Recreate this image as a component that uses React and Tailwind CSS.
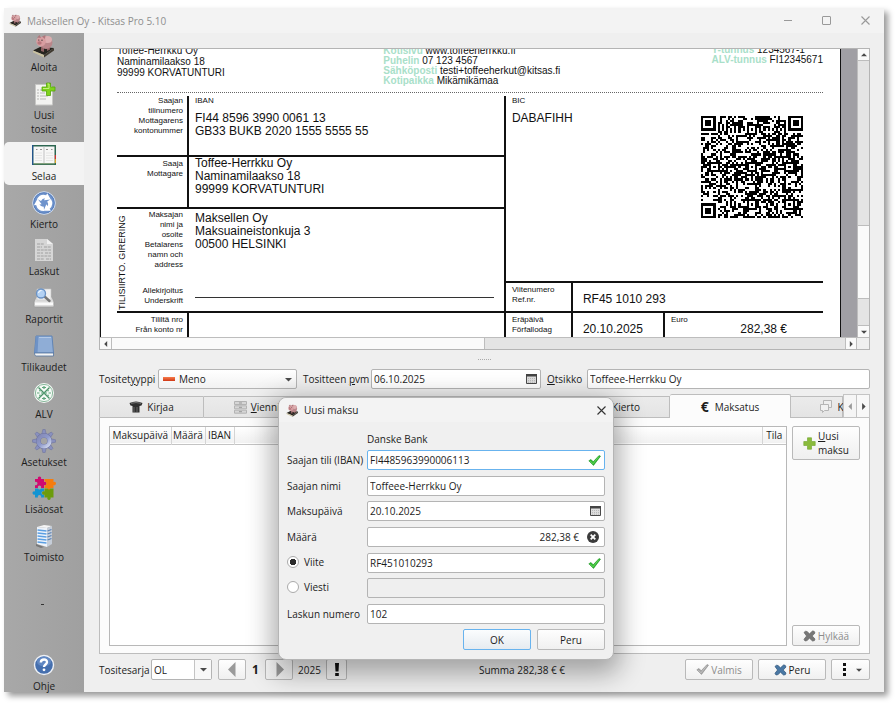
import React from "react";

const UI = "font-['Open_Sans','Noto_Sans',sans-serif] text-[10px] leading-[14px] text-[#1c1c1c]";
const FIELD = "h-5 rounded-[2px] border border-[#b4b4b4] bg-white px-[2px] text-[#1c1c1c] outline-none";
const BTN = "flex h-[21px] items-center justify-center rounded-[2px] border border-[#b9b9b9] bg-linear-to-b from-[#fefefe] to-[#f0f0f0]";

/* ---------- icons ---------- */

function Pig({ size = 24 }) {
  return (
    <svg width={size} height={size} viewBox="0 0 24 24" aria-hidden="true" className="shrink-0">
      <path d="M1 16.500 8 13l14 1-10 7z" fill="#26241f" />
      <path d="M1 16.500v1.800L12 23.500V21z" fill="#c9c09f" />
      <path d="M12 21v2.500l10-7V14z" fill="#403a30" />
      <path d="M9 13v4l3 1v-4zM15 13v4l3-1.500v-4z" fill="#8f6163" />
      <ellipse cx="14" cy="8.500" rx="6.500" ry="6.500" fill="#b9868a" />
      <ellipse cx="15.500" cy="5.500" rx="4.500" ry="3.500" fill="#dcaeb0" />
      <circle cx="9" cy="7.500" r="4.800" fill="#d79da0" />
      <path d="M5 3.500 7.500 1l1.500 3zM10 2.500 13.500 1l-.5 4z" fill="#ae777c" />
      <ellipse cx="7.500" cy="9" rx="2.200" ry="1.700" fill="#b8757b" />
      <circle cx="6.800" cy="6" r=".6" fill="#222" />
      <circle cx="10" cy="6.200" r=".6" fill="#222" />
    </svg>
  );
}

function NewDoc() {
  return (
    <svg width="24" height="24" viewBox="0 0 24 24" aria-hidden="true">
      <path d="M3.500 2.500h13l4 3V23h-17z" fill="#f3f3f1" stroke="#c6c6c4" />
      <path d="M8 8h4M8 11h5M8 14h8M8 17h6" stroke="#b9b9b9" />
      <path d="M5.500 7.500h1v1h-1zM5.500 10.500h1v1h-1zM5.500 13.500h1v1h-1zM5.500 16.500h1v1h-1z" fill="#777" />
      <path d="M14.500 1h4v4h4.500v4h-4.500v4.500h-4V9H10V5h4.500z" fill="#7fd21d" stroke="#55a50c" strokeWidth=".8" />
      <path d="M15.500 2h1.500v4.500h-6" fill="none" stroke="#c4f07c" />
    </svg>
  );
}

function Book() {
  return (
    <svg width="24" height="24" viewBox="0 0 24 24" aria-hidden="true">
      <path d="M0 2h24v20H0z" fill="#2c6650" />
      <path d="M0 2h1.500v20H0z" fill="#23548c" />
      <path d="M22.500 12H24v4h-1.500z" fill="#c33" />
      <path d="M22.500 16H24v4h-1.500z" fill="#d9a52a" />
      <path d="M1.500 3.500h21v17h-21z" fill="#f7f7f6" />
      <path d="M11.500 3.500h1v17h-1z" fill="#c2c2c2" />
      <path d="M4 6.500h1.500M8 6.500h2M14 6.500h2M19 6.500h1.500" stroke="#777" strokeWidth=".8" />
      <path d="M3 10h7M3 12.500h7M3 15h7M3 17.500h7M14 10h7M14 12.500h7M14 15h7M14 17.500h7" stroke="#dcdcdc" strokeWidth=".7" />
      <path d="M1.500 20.800h21" stroke="#7a9a6c" />
    </svg>
  );
}

function Cycle() {
  return (
    <svg width="24" height="24" viewBox="0 0 24 24" aria-hidden="true">
      <circle cx="12" cy="12" r="11.300" fill="#6e93cc" stroke="#d5e0f0" />
      <circle cx="12" cy="12" r="10.300" fill="none" stroke="#4a71b0" strokeWidth=".6" />
      {[0, 120, 240].map((a) => (
        <path key={a} transform={`rotate(${a} 12 12)`} d="M5 8A8 8 0 0 1 14.200 4.200l1-2 3.600 6.300-6.800.8 1-2A4.600 4.600 0 0 0 9 10z" fill="#fff" />
      ))}
    </svg>
  );
}

function Invoice() {
  return (
    <svg width="24" height="24" viewBox="0 0 24 24" aria-hidden="true">
      <path d="M3 1h12l6 5v17H3z" fill="#d6d6d6" />
      <path d="M15 1l6 5h-6z" fill="#efefef" />
      <path d="M5 6h7M5 9h5M12 9h7M5 12h14M5 15h6M13 15h6M5 18h14M5 21h7M14 21h5" stroke="#b2b2b2" strokeWidth="1.400" strokeDasharray="3 .7" />
    </svg>
  );
}

function Report() {
  return (
    <svg width="24" height="24" viewBox="0 0 24 24" aria-hidden="true">
      <path d="M4 11h16l2 5v4q0 1-1 1H3q-1 0-1-1v-4z" fill="#dcdcdc" stroke="#9a9a9a" strokeWidth=".8" />
      <path d="M5 3h14v11H5z" fill="#f0f0f0" stroke="#c8c8c8" strokeWidth=".6" />
      <path d="M3 16.500h18v2.500H3z" fill="#fafafa" />
      <path d="M12.500 10.500l5 4.500" stroke="#777" strokeWidth="2.400" strokeLinecap="round" />
      <circle cx="9" cy="7.500" r="4.500" fill="#b4d2f4" stroke="#6b93c6" strokeWidth="1.300" />
      <path d="M6.500 7a3 3 0 0 1 3-2.500" stroke="#fff" fill="none" />
    </svg>
  );
}

function BlueBook() {
  return (
    <svg width="24" height="24" viewBox="0 0 24 24" aria-hidden="true">
      <path d="M4 2h16l1.500 17H2.500z" fill="#8fadd6" stroke="#5a80b3" strokeWidth=".9" />
      <path d="M4 2h2.500l-1 17h-3z" fill="#6e92c6" />
      <path d="M2.500 19h19v3H4Q2.500 22 2.500 19z" fill="#f4f4f4" stroke="#54749e" strokeWidth=".8" />
      <path d="M7 3.500h12" stroke="#b3c9e6" />
    </svg>
  );
}

function Vat() {
  return (
    <svg width="24" height="24" viewBox="0 0 24 24" aria-hidden="true">
      <circle cx="12" cy="12" r="10" fill="#f4f9f5" />
      <circle cx="12" cy="12" r="8.600" fill="none" stroke="#7fb294" strokeWidth=".9" />
      <path d="M6.500 6.500l11 11M17.500 6.500l-11 11" stroke="#4b9068" strokeWidth="1.300" />
      <path d="M12 5v3M10 6.500h4M9 12h6M5 12h2.500M16.500 12H19M12 16v3M10 17.500h4" stroke="#5fa57c" strokeWidth="1.200" />
      <circle cx="8" cy="9.500" r="1" fill="#74b38d" />
      <circle cx="16" cy="9.500" r="1" fill="#74b38d" />
      <circle cx="8" cy="14.500" r="1" fill="#74b38d" />
      <circle cx="16" cy="14.500" r="1" fill="#74b38d" />
    </svg>
  );
}

function Gear() {
  return (
    <svg width="24" height="24" viewBox="0 0 24 24" aria-hidden="true">
      <defs>
        <linearGradient id="gear" x1="0" y1="0" x2="1" y2="1">
          <stop offset="0" stopColor="#8388b4" />
          <stop offset=".5" stopColor="#8f9acb" />
          <stop offset="1" stopColor="#d3daee" />
        </linearGradient>
      </defs>
      {[0, 45, 90, 135, 180, 225, 270, 315].map((a) => (
        <path key={a} transform={`rotate(${a} 12 12)`} d="M9.800 5.500l1-5h2.400l1 5z" fill="#8990be" stroke="#686f9c" strokeWidth=".5" />
      ))}
      <circle cx="12" cy="12" r="5.600" fill="none" stroke="#6d739f" strokeWidth="4.800" />
      <circle cx="12" cy="12" r="5.600" fill="none" stroke="url(#gear)" strokeWidth="4" />
    </svg>
  );
}

function Puzzle() {
  return (
    <svg width="24" height="24" viewBox="0 0 24 24" aria-hidden="true">
      <path d="M3 3h3a1.700 1.700 0 1 1 3 0h3v3a1.700 1.700 0 1 1 0 3v3H9a1.700 1.700 0 1 0-3 0H3V9a1.700 1.700 0 1 0 0-3z" fill="#cf0a70" />
      <path d="M12.500 3h9v3a1.700 1.700 0 1 1 0 3v3h-3a1.700 1.700 0 1 1-3 0h-3V9.500a2 2 0 0 0 0-4z" fill="#f57c0e" />
      <path d="M3 12.500h3a1.700 1.700 0 0 0 3 0h3v3a1.700 1.700 0 1 0 0 3v3H9a1.700 1.700 0 1 0-3 0H3v-3a1.700 1.700 0 1 1 0-3z" fill="#1394d2" />
      <path d="M12.500 12.500h3a1.700 1.700 0 0 0 3 0h3v9h-3a1.700 1.700 0 1 1-3 0h-3v-3a1.700 1.700 0 1 1 0-3z" fill="#6c9c0c" />
    </svg>
  );
}

function Tower() {
  return (
    <svg width="24" height="24" viewBox="0 0 24 24" aria-hidden="true">
      <path d="M5 3l7-2 8 1-5 2z" fill="#f5f5f5" />
      <path d="M5 3l10 1v19L5 20z" fill="#eef3fa" />
      <path d="M15 4l5-2v18l-5 3z" fill="#c5cdd8" />
      <path d="M5.500 6l9 1M5.500 9l9 1M5.500 12l9 1M5.500 15l9 1M5.500 18l9 1" stroke="#5b9fe2" strokeWidth="1.500" />
      <path d="M15.500 7l4-1.500M15.500 10l4-1.500M15.500 13l4-1.500M15.500 16l4-1.500" stroke="#5a83b5" strokeWidth="1.200" />
      <path d="M4 20l8 3-3 1-5-2z" fill="#777" />
    </svg>
  );
}

function Help() {
  return (
    <svg width="24" height="24" viewBox="0 0 24 24" aria-hidden="true">
      <circle cx="12" cy="12" r="9.500" fill="#456fae" stroke="#eef1f6" strokeWidth="1.400" />
      <ellipse cx="12" cy="8.500" rx="7" ry="5" fill="#7398cf" opacity=".6" />
      <path d="M8.800 9.500C9 5.500 15.300 5.500 15 9.300c-.1 2.200-3 2.300-3 4.700" fill="none" stroke="#fff" strokeWidth="2.400" />
      <circle cx="12" cy="16.800" r="1.400" fill="#fff" />
    </svg>
  );
}

function Check({ muted, className = "" }) {
  return (
    <svg width="13" height="11" viewBox="0 0 13 11" aria-hidden="true" className={className}>
      <path d="M.8 5.800 3 4.500l2.200 2.300L11 .6l1.500.6-7 9.200z" fill={muted ? "#a3a3a3" : "#2fb92f"} stroke={muted ? "#8d8d8d" : "#1a8f22"} strokeWidth=".6" />
      <path d="M2 5.800l3 3L10.800 1.600" fill="none" stroke={muted ? "#cfcfcf" : "#7be36c"} strokeWidth=".7" />
    </svg>
  );
}

function Cross({ color, edge }) {
  return (
    <svg width="13" height="12" viewBox="0 0 13 12" aria-hidden="true">
      <path d="M1 2.500Q2.500.5 4 1.500l2.500 2.300L9.500 1Q11.500.5 12 3L9.200 6 12 9q0 2.300-2.500 2L6.500 8.200 4 10.600Q1.500 12 1 9.300L3.600 6z" fill={color} stroke={edge} strokeWidth=".7" />
    </svg>
  );
}

function CalendarIcon({ className = "" }) {
  return (
    <svg width="11" height="10" viewBox="0 0 11 10" aria-hidden="true" className={className}>
      <path d="M.5.5h10v9H.5z" fill="#dedede" stroke="#4a4a4a" />
      <path d="M0 0h11v2.500H0z" fill="#444" />
      <path d="M2 4.500h7M2 6.500h7M2 8.200h7" stroke="#b5b5b5" strokeWidth=".9" strokeDasharray="1 1" />
    </svg>
  );
}

function CloseX({ color }) {
  return (
    <svg width="9" height="9" viewBox="0 0 9 9" aria-hidden="true">
      <path d="M.5.5l8 8M8.500.5l-8 8" stroke={color} strokeWidth="1.100" />
    </svg>
  );
}

function Triangle({ dir, color = "#4a4a4a", size = 6 }) {
  const d = { up: "M0 7 5 2l5 5z", down: "M0 3h10L5 8z", left: "M7 0v10L2 5z", right: "M3 0v10l5-5z" }[dir];
  return (
    <svg width={size} height={size} viewBox="0 0 10 10" aria-hidden="true">
      <path d={d} fill={color} />
    </svg>
  );
}

/* ---------- QR symbol, 49 x 49 modules ---------- */

const QR_SIZE = 49;

function buildQr() {
  let seed = 20251020;
  const next = () => {
    seed = (seed * 1103515245 + 12345) % 2147483648;
    return seed / 2147483648;
  };
  const grid = Array.from({ length: QR_SIZE }, () => Array.from({ length: QR_SIZE }, () => next() < 0.52));
  const rings = (cx, cy, outer, dark) => {
    for (let y = -outer; y <= outer; y++) {
      for (let x = -outer; x <= outer; x++) {
        const row = grid[cy + y];
        if (row && cx + x >= 0 && cx + x < QR_SIZE) row[cx + x] = dark.includes(Math.max(Math.abs(x), Math.abs(y)));
      }
    }
  };
  for (let i = 8; i < QR_SIZE - 8; i++) {
    grid[6][i] = i % 2 === 0;
    grid[i][6] = i % 2 === 0;
  }
  [[24, 6], [6, 24], [24, 24], [42, 24], [24, 42], [42, 42]].forEach(([x, y]) => rings(x, y, 2, [0, 2]));
  [[3, 3], [45, 3], [3, 45]].forEach(([x, y]) => rings(x, y, 4, [0, 1, 3]));
  let path = "";
  grid.forEach((row, y) => row.forEach((on, x) => {
    if (on) path += `M${x} ${y}h1v1h-1z`;
  }));
  return path;
}

const QR_PATH = buildQr();

/* ---------- sidebar ---------- */

const NAV = [
  { label: "Aloita", icon: <Pig /> },
  { label: "Uusi tosite", icon: <NewDoc />, tall: true },
  { label: "Selaa", icon: <Book />, active: true },
  { label: "Kierto", icon: <Cycle /> },
  { label: "Laskut", icon: <Invoice /> },
  { label: "Raportit", icon: <Report /> },
  { label: "Tilikaudet", icon: <BlueBook /> },
  { label: "ALV", icon: <Vat /> },
  { label: "Asetukset", icon: <Gear /> },
  { label: "Lisäosat", icon: <Puzzle /> },
  { label: "Toimisto", icon: <Tower /> },
];

function NavButton({ label, icon, tall, active }) {
  return (
    <button
      type="button"
      className={`flex w-full flex-col items-center gap-[2px] pt-px ${tall ? "h-[57px]" : "h-[43px]"} ${active ? "rounded-l-[5px] bg-[#f3f3f3]" : ""}`}
    >
      {icon}
      <span className={tall ? "w-8 text-center" : ""}>{label}</span>
    </button>
  );
}

function Sidebar() {
  return (
    <aside className="flex w-20 shrink-0 flex-col bg-linear-to-r from-[#a8a8a8] to-[#a0a0a0]">
      <nav className="flex h-[533px] flex-col justify-between">
        {NAV.map((item) => <NavButton key={item.label} {...item} />)}
      </nav>
      <span className="mt-[38px] ml-[37px] h-px w-[3px] bg-[#333]" />
      <div className="mt-auto mb-[-3px]">
        <NavButton label="Ohje" icon={<Help />} />
      </div>
    </aside>
  );
}

/* ---------- invoice preview ---------- */

const SMALL = "text-[8px] leading-[10px]";
const BODY = "text-[12px] leading-[13px]";

function Green({ children }) {
  return <b className="text-[#a9dfc9]">{children}</b>;
}

function Caption({ children, className = "" }) {
  return <div className={`w-[72px] shrink-0 border-r-2 pr-1 text-right ${SMALL} ${className}`}>{children}</div>;
}

function InvoicePage() {
  return (
    <div className="flex min-w-0 flex-1 flex-col overflow-hidden border-x border-[#111] bg-white pr-[17px] pl-4 font-['Liberation_Sans',Arial,sans-serif] text-[#111]">
      <div className="flex h-11 shrink-0 items-end border-b border-dotted border-[#666] text-[10px]">
        <div className="flex h-full flex-[267] flex-col justify-end overflow-hidden pb-[14px] leading-[11px] whitespace-nowrap">
          <p>Toffee-Herrkku Oy</p>
          <p>Naminamilaakso 18</p>
          <p>99999 KORVATUNTURI</p>
        </div>
        <div className="flex h-full flex-[329] flex-col justify-end overflow-hidden pb-[6px] leading-[10px] whitespace-nowrap">
          <p><Green>Kotisivu</Green> www.toffeeherrkku.fi</p>
          <p><Green>Puhelin</Green> 07 123 4567</p>
          <p><Green>Sähköposti</Green> testi+toffeeherkut@kitsas.fi</p>
          <p><Green>Kotipaikka</Green> Mikämikämaa</p>
        </div>
        <div className="flex h-full flex-[110] flex-col justify-end pb-[27px] leading-[10px] whitespace-nowrap">
          <p><Green>Y-tunnus</Green> 1234567-1</p>
          <p><Green>ALV-tunnus</Green> FI12345671</p>
        </div>
      </div>

      <div className="mt-[3px] flex min-h-0 flex-1 overflow-hidden">
        <div className="flex flex-[388] flex-col">
          <div className="flex h-[61px] shrink-0 border-b-2">
            <Caption>Saajan<br />tilinumero<br />Mottagarens<br />kontonummer</Caption>
            <div className="pl-[6px]">
              <p className={SMALL}>IBAN</p>
              <p className={`mt-[6px] ${BODY}`}>FI44 8596 3990 0061 13</p>
              <p className={BODY}>GB33 BUKB 2020 1555 5555 55</p>
            </div>
          </div>
          <div className="flex h-[52px] shrink-0 border-b-2">
            <Caption className="pt-[2px]">Saaja<br />Mottagare</Caption>
            <div className={`pl-[6px] ${BODY}`}>
              <p>Toffee-Herrkku Oy</p>
              <p>Naminamilaakso 18</p>
              <p>99999 KORVATUNTURI</p>
            </div>
          </div>
          <div className="flex h-[104px] shrink-0 border-b-2">
            <div className="flex w-[10px] rotate-180 items-center justify-center pb-[6px] text-[9px] leading-[10px] whitespace-nowrap [writing-mode:vertical-rl]">
              TILISIIRTO. GIRERING
            </div>
            <div className={`flex w-[62px] flex-col justify-between pt-px pr-[6px] pb-[5px] text-right ${SMALL}`}>
              <p>Maksajan<br />nimi ja<br />osoite<br />Betalarens<br />namn och<br />address</p>
              <p>Allekirjoitus<br />Underskrift</p>
            </div>
            <div className={`flex flex-1 flex-col pt-[3px] pr-[10px] pb-[13px] pl-[6px] ${BODY}`}>
              <p>Maksellen Oy</p>
              <p>Maksuaineistonkuja 3</p>
              <p>00500 HELSINKI</p>
              <div className="mt-auto border-b border-[#333]" />
            </div>
          </div>
          <div className="flex min-h-0 flex-1">
            <Caption className="pt-[2px] whitespace-nowrap">Tililtä nro<br />Från konto nr</Caption>
          </div>
        </div>

        <div className="flex flex-[318] flex-col border-l-2">
          <div className="flex h-[187px] shrink-0 justify-between border-b-2 pr-5 pl-[6px]">
            <div>
              <p className={SMALL}>BIC</p>
              <p className={`mt-[6px] ${BODY}`}>DABAFIHH</p>
            </div>
            <svg width="102" height="102" viewBox="0 0 49 49" className="mt-5" role="img" aria-label="QR" shapeRendering="crispEdges">
              <path d={QR_PATH} fill="#000" />
            </svg>
          </div>
          <div className="flex h-[30px] shrink-0 border-b-2">
            <div className={`w-[67px] shrink-0 border-r-2 pt-[2px] pl-[6px] ${SMALL}`}>Viitenumero<br />Ref.nr.</div>
            <p className={`pt-[10px] pl-[10px] ${BODY}`}>RF45 1010 293</p>
          </div>
          <div className="flex min-h-0 flex-1">
            <div className={`w-[67px] shrink-0 border-r-2 pt-[2px] pl-[6px] ${SMALL}`}>Eräpäivä<br />Förfallodag</div>
            <p className={`w-[92px] border-r-2 pt-[10px] pl-[10px] ${BODY}`}>20.10.2025</p>
            <p className={`pt-[2px] pl-[6px] ${SMALL}`}>Euro</p>
            <p className={`ml-auto pt-[10px] pr-9 ${BODY}`}>282,38 €</p>
          </div>
        </div>
      </div>
    </div>
  );
}

const SCROLL_BTN = "flex shrink-0 items-center justify-center border-[#bdbdbd] bg-[#fafafa]";

function Preview() {
  return (
    <section className="flex h-[302px] shrink-0 flex-col border border-[#b4b4b4]">
      <div className="flex min-h-0 flex-1">
        <InvoicePage />
        <div className="w-4 bg-[#a09fa4]" />
        <div className="flex w-3 flex-col border-l border-[#bdbdbd] bg-[#e4e4e4]">
          <button type="button" aria-label="Ylös" className={`h-3 border-b ${SCROLL_BTN}`}><Triangle dir="up" /></button>
          <div className="flex-[165]" />
          <div className="flex-[73] border-y border-[#bdbdbd] bg-[#fafafa]" />
          <div className="flex-[26]" />
          <button type="button" aria-label="Alas" className={`h-3 border-t ${SCROLL_BTN}`}><Triangle dir="down" /></button>
        </div>
      </div>
      <div className="flex h-3 shrink-0 border-t border-[#bdbdbd] bg-[#e4e4e4]">
        <button type="button" aria-label="Vasemmalle" className={`w-3 border-r ${SCROLL_BTN}`}><Triangle dir="left" /></button>
        <div className="flex-[372] border-r border-[#bdbdbd] bg-[#fafafa]" />
        <div className="flex-[361]" />
        <button type="button" aria-label="Oikealle" className={`w-3 border-x ${SCROLL_BTN}`}><Triangle dir="right" /></button>
        <div className="w-3 bg-[#efefef]" />
      </div>
    </section>
  );
}

/* ---------- voucher fields and tabs ---------- */

function VoucherFields() {
  return (
    <div className="flex items-center gap-[6px]">
      <label htmlFor="type" className="w-[53px] whitespace-nowrap">Tositet<u>y</u>yppi</label>
      <div className="relative">
        <select id="type" className="h-5 w-[139px] appearance-none rounded-[2px] border border-[#b4b4b4] bg-linear-to-b from-white to-[#f2f2f2] pl-5">
          <option>Meno</option>
        </select>
        <span className="pointer-events-none absolute top-2 left-[5px] h-1 w-3 bg-linear-to-b from-[#f77b4a] to-[#cf3512]" />
        <span className="pointer-events-none absolute top-[7px] right-[5px]"><Triangle dir="down" size={7} /></span>
      </div>
      <label htmlFor="date" className="w-[62px] whitespace-nowrap">Tositteen <u>p</u>vm</label>
      <div className="relative">
        <input id="date" defaultValue="06.10.2025" className={`w-[170px] ${FIELD}`} />
        <CalendarIcon className="absolute top-[5px] right-1" />
      </div>
      <label htmlFor="title" className="w-[34px] whitespace-nowrap"><u>O</u>tsikko</label>
      <input id="title" defaultValue="Toffeee-Herrkku Oy" className={`min-w-0 flex-1 ${FIELD}`} />
    </div>
  );
}

const TAB = "flex h-[22px] shrink-0 items-center justify-center gap-1 border-t border-r border-b border-[#bdbdbd] bg-linear-to-b from-[#ebebeb] to-[#e4e4e4]";

function Tabs() {
  return (
    <div className="flex h-6 items-end overflow-hidden" role="tablist">
      <button type="button" role="tab" className={`w-[105px] rounded-tl-[2px] border-l ${TAB}`}>
        <svg width="14" height="12" viewBox="0 0 14 12" aria-hidden="true">
          <path d="M.5 2Q7-1 13.500 2l-1 2.500-2 .5v6.500h-7V5l-2-.5z" fill="#2f2f2f" />
          <path d="M2 2.300q5-1.500 10 0" fill="none" stroke="#888" strokeWidth=".8" />
          <path d="M5 6v5M8 6v5" stroke="#777" strokeWidth=".8" />
        </svg>
        Kirjaa
      </button>
      <button type="button" role="tab" className={`w-[110px] ${TAB}`}>
        <svg width="13" height="13" viewBox="0 0 13 13" aria-hidden="true">
          <path d="M.5.5h12v3H.5zM.5 4.800h12v3H.5zM.5 9.200h12v3H.5z" fill="#d6d6d6" stroke="#b3b3b3" />
          <path d="M5 2h3M5 6.300h3M5 10.700h3" stroke="#999" />
        </svg>
        <span><u>V</u>iennit</span>
      </button>
      <div className={`flex-[141] ${TAB}`} />
      <div className={`flex-[110] ${TAB}`} />
      <button type="button" role="tab" className={`w-[105px] pl-[18px] ${TAB}`}>Kierto</button>
      <button type="button" role="tab" aria-selected="true" className="flex h-6 w-[121px] shrink-0 items-center justify-center gap-[6px] rounded-t-[2px] border-t border-r border-[#bdbdbd] bg-[#fcfcfc]">
        <b className="text-[14px]">€</b>Maksatus
      </button>
      <button type="button" role="tab" className={`w-[52px] pl-[30px] ${TAB}`}>
        <svg width="14" height="14" viewBox="0 0 14 14" aria-hidden="true" className="shrink-0">
          <path d="M4.500.5h8v7h-8z" fill="#eee" stroke="#b5b5b5" />
          <path d="M1.500 4.500h8v6h-4l-2 2v-2h-2z" fill="#f1f1f1" stroke="#b5b5b5" />
        </svg>
        K
      </button>
      <button type="button" aria-label="Edelliset" className="flex h-6 w-[13px] shrink-0 items-center justify-center border border-r-0 border-[#c4c4c4] bg-[#f5f5f5]"><Triangle dir="left" color="#999" size={7} /></button>
      <button type="button" aria-label="Seuraavat" className="flex h-6 w-[14px] shrink-0 items-center justify-center border border-[#c4c4c4] bg-[#f8f8f8]"><Triangle dir="right" size={7} /></button>
    </div>
  );
}

const TH = "border-r border-[#d4d4d4] text-center font-normal";

function PaymentsPanel() {
  return (
    <div className="flex min-h-0 flex-1 gap-[5px] border border-t-0 border-[#bdbdbd] bg-[#fcfcfc] px-[9px] pt-2 pb-[7px]">
      <div className="min-w-0 flex-1 border border-[#b8b8b8] bg-white">
        <table className="w-full table-fixed border-collapse">
          <thead>
            <tr className="h-[17px] border-b border-[#c4c4c4] bg-linear-to-b from-white to-[#f1f1f1]">
              <th className={`w-[61px] ${TH}`}>Maksupäivä</th>
              <th className={`w-[34px] ${TH}`}>Määrä</th>
              <th className={`w-[29px] ${TH}`}>IBAN</th>
              <th className={TH} />
              <th className="w-6 text-center font-normal">Tila</th>
            </tr>
          </thead>
          <tbody />
        </table>
      </div>
      <div className="flex w-[68px] flex-col justify-between">
        <button type="button" className="flex h-[34px] items-center justify-center gap-[2px] rounded-[2px] border border-[#b9b9b9] bg-linear-to-b from-[#fefefe] to-[#efefef] text-left">
          <svg width="13" height="13" viewBox="0 0 13 13" aria-hidden="true">
            <path d="M4.500.8h4v3.700h3.700v4H8.500v3.700h-4V8.500H.8v-4h3.700z" fill="#8abb3c" stroke="#7aaa38" strokeWidth=".7" />
          </svg>
          <span><u>U</u>usi<br />maksu</span>
        </button>
        <button type="button" disabled className={`gap-[2px] text-[#8c8c8c] ${BTN}`}><Cross color="#777" edge="#666" />Hylkää</button>
      </div>
    </div>
  );
}

function BottomBar() {
  return (
    <div className="mt-[5px] flex items-center">
      <label htmlFor="series" className="w-[46px] whitespace-nowrap">Tositesarja</label>
      <div className="relative ml-[6px]">
        <select id="series" className="block h-[21px] w-[61px] appearance-none rounded-[2px] border border-[#b4b4b4] bg-white pl-[2px]">
          <option>OL</option>
        </select>
        <span className="pointer-events-none absolute inset-y-px right-px flex w-[17px] items-center justify-center border-l border-[#c4c4c4] bg-[#f8f8f8]"><Triangle dir="down" size={7} /></span>
      </div>
      <button type="button" aria-label="Edellinen" className={`ml-[6px] w-7 ${BTN}`}><Triangle dir="left" color="#9a9a9a" size={15} /></button>
      <b className="w-[19px] text-center text-[12px]">1</b>
      <button type="button" aria-label="Seuraava" className={`w-7 ${BTN}`}><Triangle dir="right" color="#9a9a9a" size={15} /></button>
      <span className="w-[33px] text-center">2025</span>
      <button type="button" aria-label="Huomautus" className={`w-[21px] ${BTN}`}>
        <svg width="6" height="13" viewBox="0 0 6 13" aria-hidden="true"><path d="M1 0h4l-.5 8.500h-3zM1.200 10h3.600v3H1.200z" fill="#111" /></svg>
      </button>
      <span className="flex-1 pl-3 text-center">Summa 282,38 € €</span>
      <div className="flex gap-[5px]">
        <button type="button" disabled className={`w-[68px] gap-[2px] text-[#8c8c8c] ${BTN}`}><Check muted />Valmis</button>
        <button type="button" className={`w-[68px] gap-[2px] ${BTN}`}><Cross color="#4a78a4" edge="#2d5378" />Peru</button>
        <button type="button" aria-label="Lisää" className={`w-[39px] gap-[10px] pl-1 ${BTN}`}>
          <svg width="3" height="13" viewBox="0 0 3 13" aria-hidden="true"><path d="M0 0h3v3H0zM0 5h3v3H0zM0 10h3v3H0z" fill="#111" /></svg>
          <Triangle dir="down" />
        </button>
      </div>
    </div>
  );
}

/* ---------- payment dialog ---------- */

function Row({ id, label, children }) {
  return (
    <div className="flex h-5 items-center">
      <label htmlFor={id} className="w-20 shrink-0 whitespace-nowrap">{label}</label>
      <div className="relative flex flex-1">{children}</div>
    </div>
  );
}

function RadioRow({ id, label, checked, children }) {
  return (
    <div className="flex h-5 items-center">
      <label htmlFor={id} className="flex w-20 shrink-0 items-center gap-[5px] pb-[2px]">
        <input id={id} type="radio" name="reference-kind" defaultChecked={checked} className="h-3 w-3 appearance-none rounded-full border border-[#aaa] bg-white checked:bg-[radial-gradient(circle,#2b2b2b_0_3px,#fff_3px)]" />
        {label}
      </label>
      <div className="relative flex flex-1">{children}</div>
    </div>
  );
}

function Dialog() {
  return (
    <div role="dialog" aria-label="Uusi maksu" className="absolute top-[389px] left-[274px] w-[336px] rounded-lg border border-[#b5b5b5] bg-[#f0f0f0] shadow-[0_8px_26px_6px_rgba(0,0,0,0.32)]">
      <div className="flex h-6 items-center rounded-t-lg bg-[#f3f3f3] px-[7px]">
        <Pig size={13} />
        <span className="ml-[5px] flex-1">Uusi maksu</span>
        <button type="button" aria-label="Sulje"><CloseX color="#333" /></button>
      </div>
      <form className="px-2 pb-[9px]" onSubmit={(e) => e.preventDefault()}>
        <p className="pt-[10px] pb-1 pl-20">Danske Bank</p>
        <div className="flex h-[174px] flex-col justify-between">
          <Row id="iban" label="Saajan tili (IBAN)">
            <input id="iban" defaultValue="FI4485963990006113" className="h-5 w-full rounded-[2px] border border-[#68b3ee] bg-white px-[2px] text-[#1c1c1c] outline-none" />
            <Check className="absolute top-[5px] right-1" />
          </Row>
          <Row id="payee" label="Saajan nimi">
            <input id="payee" defaultValue="Toffeee-Herrkku Oy" className={`w-full ${FIELD}`} />
          </Row>
          <Row id="due" label="Maksupäivä">
            <input id="due" defaultValue="20.10.2025" className={`w-full ${FIELD}`} />
            <CalendarIcon className="absolute top-[5px] right-1" />
          </Row>
          <Row id="amount" label="Määrä">
            <input id="amount" defaultValue="282,38 €" className="h-5 w-full rounded-[2px] border border-[#b4b4b4] bg-white pr-[25px] pl-[2px] text-right text-[#1c1c1c] outline-none" />
            <svg width="12" height="12" viewBox="0 0 12 12" aria-hidden="true" className="absolute top-1 right-[6px]">
              <circle cx="6" cy="6" r="6" fill="#3c3c3c" />
              <path d="M3.700 3.700l4.600 4.600M8.300 3.700 3.700 8.300" stroke="#fff" strokeWidth="1.800" />
            </svg>
          </Row>
          <RadioRow id="kind-reference" label="Viite" checked>
            <input aria-label="Viite" defaultValue="RF451010293" className={`w-full ${FIELD}`} />
            <Check className="absolute top-[5px] right-1" />
          </RadioRow>
          <RadioRow id="kind-message" label="Viesti">
            <input aria-label="Viesti" disabled className="h-5 w-full rounded-[2px] border border-[#b4b4b4] bg-[#efefef]" />
          </RadioRow>
          <Row id="number" label="Laskun numero">
            <input id="number" defaultValue="102" className={`w-full ${FIELD}`} />
          </Row>
        </div>
        <div className="mt-[5px] flex justify-end gap-[6px]">
          <button type="submit" className="h-[21px] w-[68px] rounded-[2px] border border-[#68b3ee] bg-linear-to-b from-[#fbfdfe] to-[#e6ebf0]">OK</button>
          <button type="button" className="h-[21px] w-[68px] rounded-[2px] border border-[#b9b9b9] bg-linear-to-b from-[#fefefe] to-[#f0f0f0]">Peru</button>
        </div>
      </form>
    </div>
  );
}

/* ---------- window ---------- */

export default function App() {
  return (
    <div className={`flex h-screen min-h-[703px] min-w-[896px] bg-white pt-2 pr-3 pb-[11px] pl-1 ${UI}`}>
      <div className="relative flex min-w-0 flex-1 flex-col bg-[#efefef] shadow-[4px_4px_6px_rgba(0,0,0,0.4)]">
        <header className="flex h-[25px] shrink-0 items-center bg-[#f3f3f3] pr-[14px] pl-[5px] text-[#8f8f8f]">
          <Pig size={13} />
          <h1 className="ml-[5px] flex-1">Maksellen Oy - Kitsas Pro 5.10</h1>
          <div className="flex items-center gap-[30px]">
            <button type="button" aria-label="Pienennä" className="h-px w-2 bg-[#999]" />
            <button type="button" aria-label="Suurenna" className="h-[9px] w-[9px] rounded-[1px] border border-[#999]" />
            <button type="button" aria-label="Sulje"><CloseX color="#999" /></button>
          </div>
        </header>
        <div className="flex min-h-0 flex-1">
          <Sidebar />
          <main className="flex min-w-0 flex-1 flex-col pt-[15px] pr-[14px] pb-3 pl-[15px]">
            <Preview />
            <div className="flex h-[19px] shrink-0 items-center justify-center gap-px">
              {[0, 1, 2, 3, 4, 5, 6].map((n) => <span key={n} className="h-px w-px bg-[#aaa]" />)}
            </div>
            <VoucherFields />
            <div className="mt-[5px] flex min-h-0 flex-1 flex-col">
              <Tabs />
              <PaymentsPanel />
            </div>
            <BottomBar />
          </main>
        </div>
        <Dialog />
      </div>
    </div>
  );
}
